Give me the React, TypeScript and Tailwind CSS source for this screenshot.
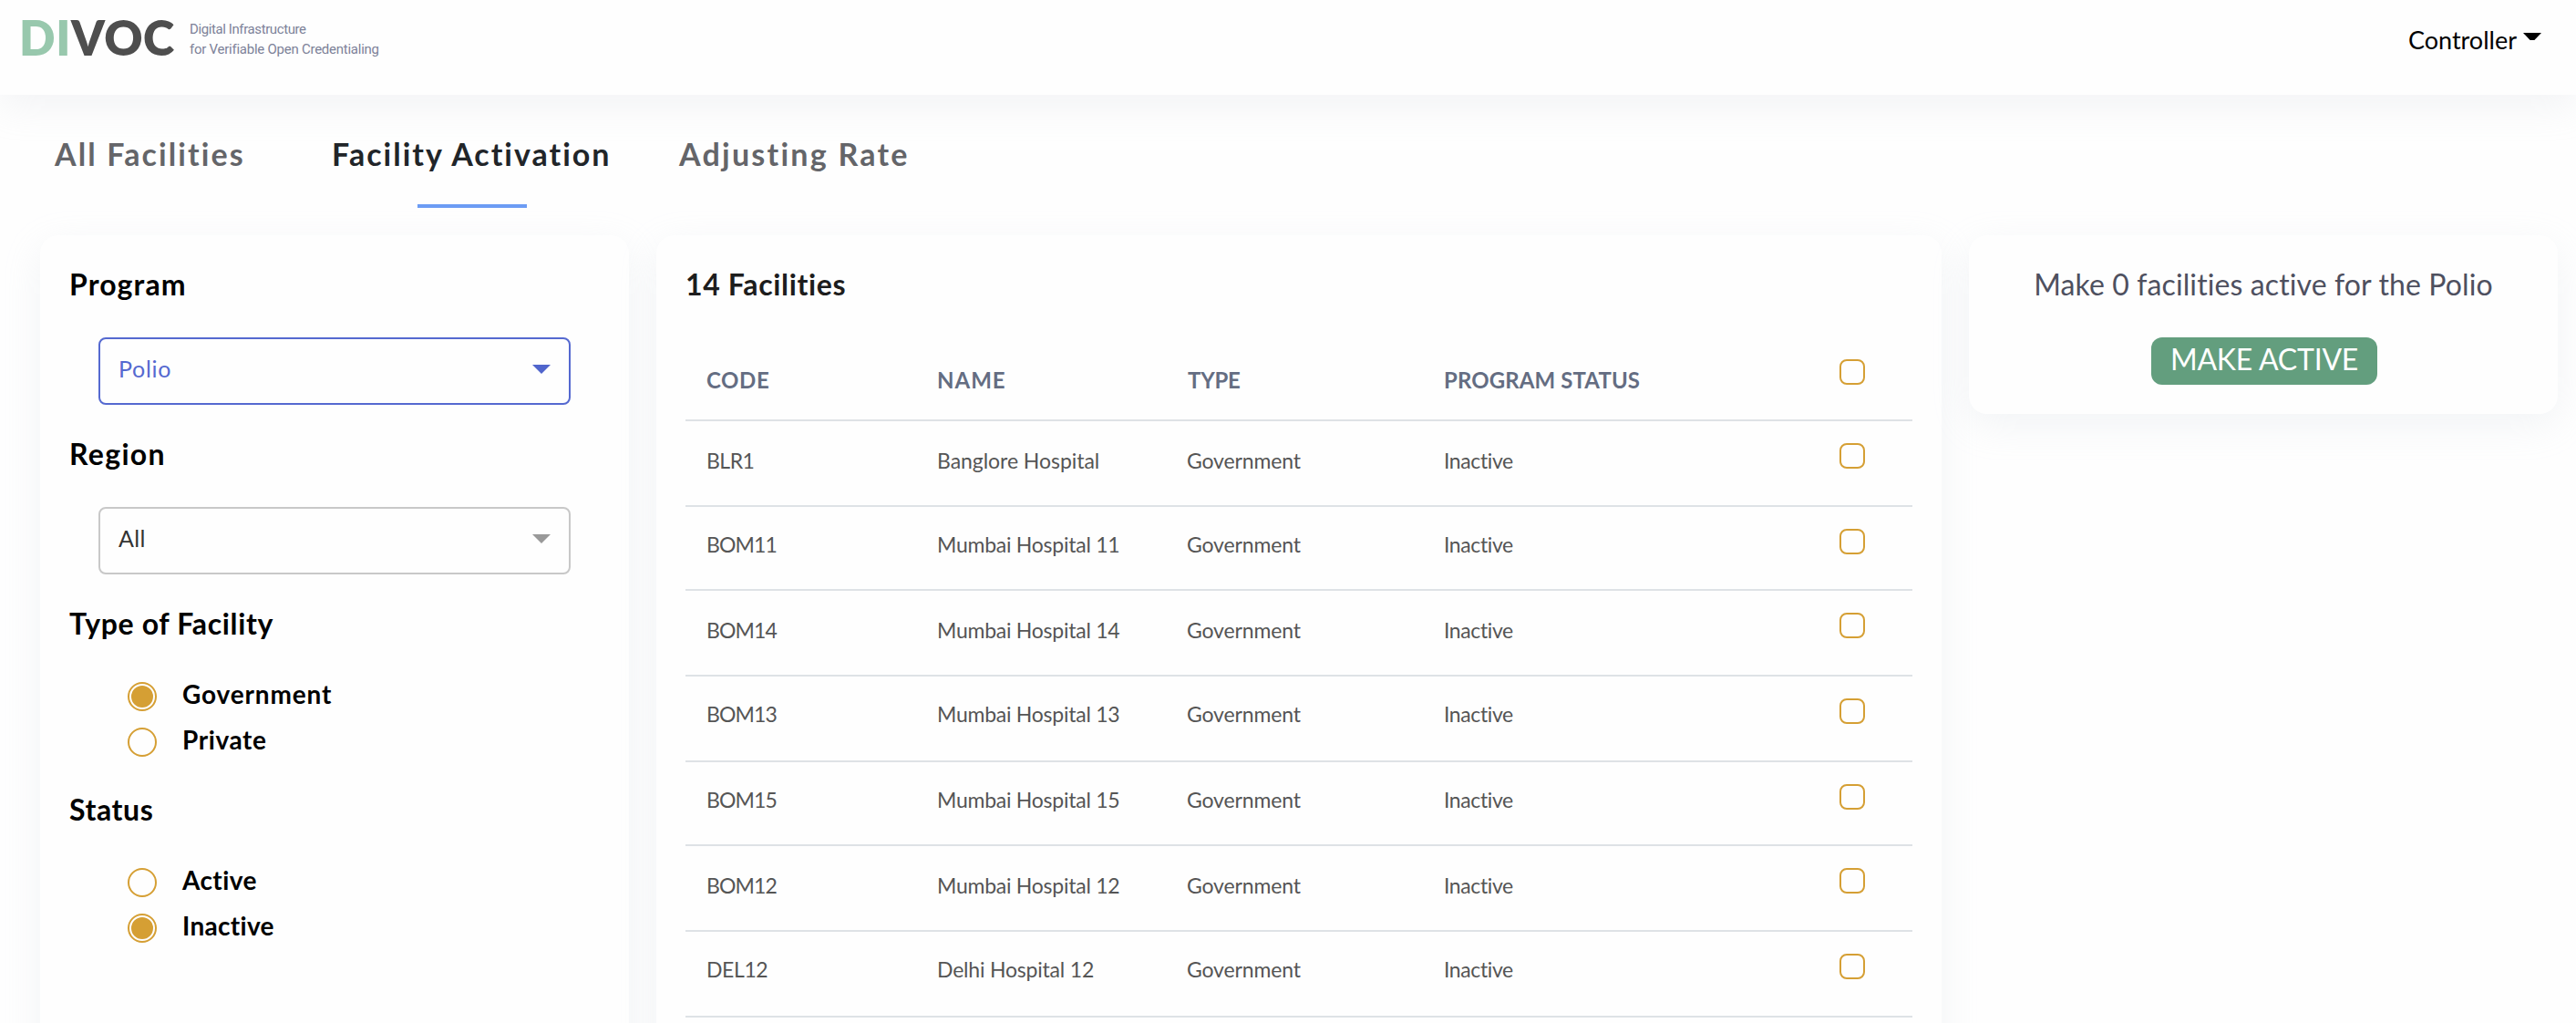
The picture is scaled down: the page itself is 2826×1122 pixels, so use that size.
import React from "react";

type Row = {
  code: string;
  name: string;
  height: string;
  pad: string;
  codeTracking: string;
  nameTracking: string;
};

const CODE = "tracking-[-0.9px]";
const NAME = "tracking-[-0.25px]";

const rows: Row[] = [
  { code: "BLR1", name: "Banglore Hospital", height: "h-[94px]", pad: "pt-7", codeTracking: "tracking-[-0.5px]", nameTracking: "tracking-[-0.05px]" },
  { code: "BOM11", name: "Mumbai Hospital 11", height: "h-[92px]", pad: "pt-[26px]", codeTracking: CODE, nameTracking: NAME },
  { code: "BOM14", name: "Mumbai Hospital 14", height: "h-[94px]", pad: "pt-7", codeTracking: CODE, nameTracking: NAME },
  { code: "BOM13", name: "Mumbai Hospital 13", height: "h-[94px]", pad: "pt-[26px]", codeTracking: CODE, nameTracking: NAME },
  { code: "BOM15", name: "Mumbai Hospital 15", height: "h-[92px]", pad: "pt-[26px]", codeTracking: CODE, nameTracking: NAME },
  { code: "BOM12", name: "Mumbai Hospital 12", height: "h-[94px]", pad: "pt-7", codeTracking: CODE, nameTracking: NAME },
  { code: "DEL12", name: "Delhi Hospital 12", height: "h-[94px]", pad: "pt-[26px]", codeTracking: "tracking-[-0.4px]", nameTracking: "tracking-[-0.2px]" },
];

const GRID = "grid grid-cols-[253px_274px_282px_434px_28px] pl-[23px] border-b-2 border-[#dee2e6]";
const CARD = "rounded-[20px] bg-[#fefefe] shadow-[0_12px_40px_rgba(193,207,217,0.2)]";

function Heading({ children, className }: { children: React.ReactNode; className: string }) {
  return <h2 className={`text-[32px] leading-10 font-bold whitespace-nowrap ${className}`}>{children}</h2>;
}

function Caret({ className }: { className: string }) {
  return (
    <svg className={`h-[10px] w-5 ${className}`} viewBox="0 0 20 10" fill="currentColor">
      <path d="M0 0h20L10 10z" />
    </svg>
  );
}

function Select({ value, className, caret }: { value: string; className: string; caret: string }) {
  return (
    <div className={`mt-[38px] ml-8 flex h-[74px] w-[518px] items-start justify-between rounded-lg border-2 pr-5 pl-5 ${className}`}>
      <span className="pt-4 text-[25px] leading-8">{value}</span>
      <Caret className={`mt-7 ${caret}`} />
    </div>
  );
}

function Radio({ label, checked, className }: { label: string; checked?: boolean; className: string }) {
  return (
    <label className="flex h-8 items-start gap-7">
      <span className="flex size-8 items-center justify-center rounded-full border-2 border-[#d59f34]">
        {checked && <span className="size-6 rounded-full bg-[#d59f34]" />}
      </span>
      <span className={`text-[28px] leading-[26px] font-bold ${className}`}>{label}</span>
    </label>
  );
}

function Checkbox({ className }: { className: string }) {
  return <span className={`block size-7 rounded-lg border-2 border-[#d59f34] ${className}`} />;
}

export default function App() {
  return (
    <div className="h-[1122px] w-[2826px] overflow-hidden bg-[#fefefe] font-['Lato',sans-serif] text-black [font-variant-ligatures:none]">
      <header className="flex h-[104px] items-start justify-between pr-[38px] pl-[21px] shadow-[0_12px_40px_rgba(193,200,209,0.2)]">
        <div className="flex items-start">
          <div className="mt-[11px] w-[187px] text-[52px] leading-[60px] font-extrabold tracking-[0.6px] text-[#4e4e4e]">
            <span className="text-[#98c8ad]">DI</span>VOC
          </div>
          <div className="mt-[21px] font-['Roboto',sans-serif] text-[15px] leading-[22px] whitespace-nowrap text-[#7d8299]">
            <div className="tracking-[-0.4px]">Digital Infrastructure</div>
            <div className="tracking-[-0.25px]">for Verifiable Open Credentialing</div>
          </div>
        </div>
        <div className="flex items-start gap-[7px]">
          <span className="mt-6 text-[27px] leading-10">Controller</span>
          <svg className="mt-9 h-2 w-5" viewBox="0 0 20 8">
            <path d="M0 0h20L12.4 8H7.6z" />
          </svg>
        </div>
      </header>

      <nav className="flex h-[154px] items-start pt-[45px] pl-[60px] text-[34px] leading-10 font-bold whitespace-nowrap text-[#646569]">
        <div className="w-[304px] tracking-[2.1px]">All Facilities</div>
        <div className="flex w-[381px] flex-col text-[#212529]">
          <span className="tracking-[2px]">Facility Activation</span>
          <span className="mt-[35px] ml-[94px] h-1 w-[120px] bg-[#6c9cf4]" />
        </div>
        <div className="tracking-[2.25px]">Adjusting Rate</div>
      </nav>

      <main className="flex items-start gap-[30px] pl-11">
        <section className={`h-[1000px] w-[646px] shrink-0 pt-[34px] pl-8 ${CARD}`}>
          <Heading className="tracking-[1.1px]">Program</Heading>
          <Select value="Polio" className="border-[#5569d0] tracking-[0.7px] text-[#5569d0]" caret="text-[#5065cc]" />
          <Heading className="mt-[34px] tracking-[1.3px]">Region</Heading>
          <Select value="All" className="border-[#c8c8c8] tracking-[0.3px] text-[#333]" caret="text-[#999]" />
          <Heading className="mt-[34px] tracking-[0.65px]">Type of Facility</Heading>
          <div className="mt-11 ml-16 flex flex-col gap-[18px]">
            <Radio label="Government" checked className="tracking-[0.85px]" />
            <Radio label="Private" className="tracking-[0.6px]" />
          </div>
          <Heading className="mt-[38px] tracking-[0.6px]">Status</Heading>
          <div className="mt-11 ml-16 flex flex-col gap-[18px]">
            <Radio label="Active" className="tracking-[0.4px]" />
            <Radio label="Inactive" checked className="tracking-[0.3px]" />
          </div>
        </section>

        <section className={`h-[1000px] w-[1410px] shrink-0 px-8 pt-[34px] ${CARD}`}>
          <Heading className="tracking-[0.63px] text-[#1d1d1d]">14 Facilities</Heading>
          <div>
            <div className={`h-[130px] text-2xl leading-[30px] font-bold text-[#646d82] ${GRID}`}>
              <div className="pt-[70px] tracking-[0.6px]">CODE</div>
              <div className="pt-[70px] tracking-[1px]">NAME</div>
              <div className="pt-[70px] pl-px tracking-[-0.25px]">TYPE</div>
              <div className="pt-[70px] tracking-[0.1px]">PROGRAM STATUS</div>
              <Checkbox className="mt-[62px]" />
            </div>
            {rows.map((r) => (
              <div key={r.code} className={`text-[23px] leading-[30px] text-[#555] ${GRID} ${r.height}`}>
                <div className={`${r.pad} ${r.codeTracking}`}>{r.code}</div>
                <div className={`${r.pad} ${r.nameTracking}`}>{r.name}</div>
                <div className={`${r.pad} tracking-[-0.15px]`}>Government</div>
                <div className={`${r.pad} tracking-[-0.4px]`}>Inactive</div>
                <Checkbox className="mt-6" />
              </div>
            ))}
          </div>
        </section>

        <section className={`flex h-[196px] w-[646px] shrink-0 flex-col items-center pt-[34px] ${CARD}`}>
          <p className="text-[32px] leading-10 tracking-[0.11px] whitespace-nowrap text-[#4e505f]">
            Make 0 facilities active for the Polio
          </p>
          <button className="mt-[38px] ml-0.5 h-[52px] w-[248px] rounded-xl bg-[#639e7e] text-[32px] leading-[47px] tracking-[-0.22px] text-white">
            <span className="block h-full">MAKE ACTIVE</span>
          </button>
        </section>
      </main>
    </div>
  );
}
